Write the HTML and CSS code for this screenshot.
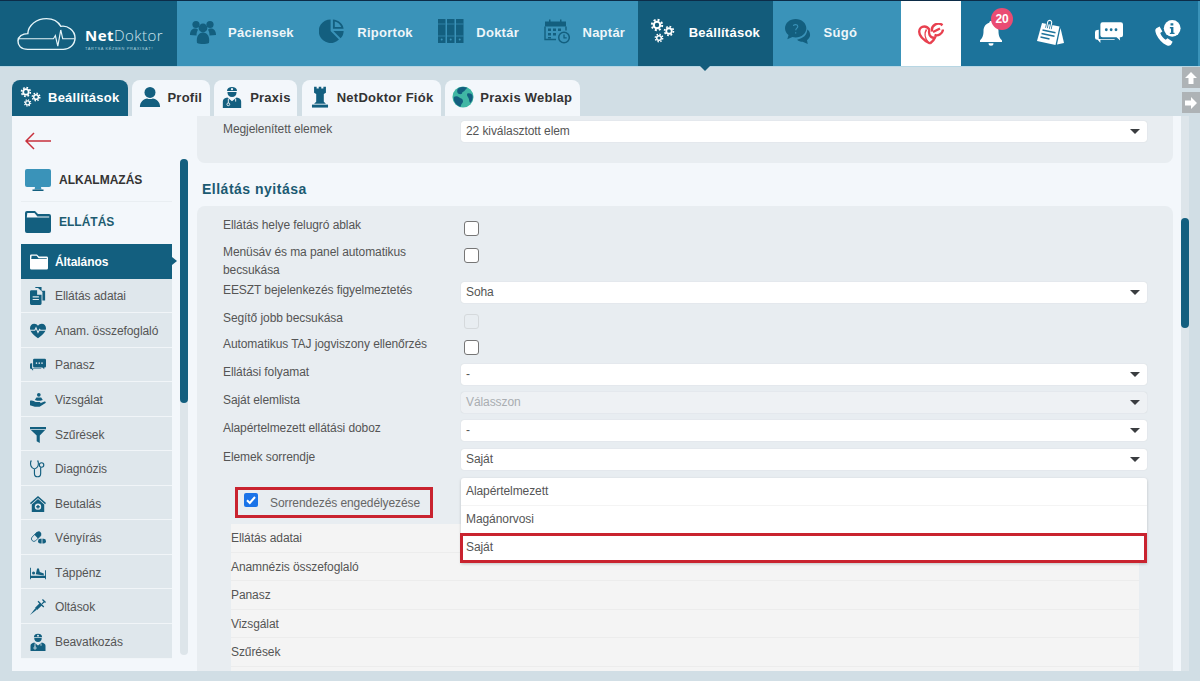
FILE: index.html
```html
<!DOCTYPE html>
<html lang="hu">
<head>
<meta charset="utf-8">
<title>NetDoktor – Beállítások</title>
<link rel="stylesheet" href="styles.css">
</head>
<body>
<svg class="defs" width="0" height="0" aria-hidden="true">
  <symbol id="gear" viewBox="-10 -10 20 20">
    <circle r="4.6" fill="none" stroke="currentColor" stroke-width="3"/>
    <circle r="7.4" fill="none" stroke="currentColor" stroke-width="2.8" stroke-dasharray="2.9 2.9"/>
  </symbol>
  <symbol id="gears" viewBox="0 0 26 26">
    <use href="#gear" x="0" y="0" width="14" height="14"/>
    <use href="#gear" x="13" y="7" width="12" height="12"/>
    <use href="#gear" x="4" y="15" width="10" height="10"/>
  </symbol>
  <symbol id="users" viewBox="0 0 26 26">
    <circle cx="6" cy="6.5" r="3.6"/><circle cx="20" cy="6.5" r="3.6"/><circle cx="13" cy="10" r="4.4"/>
    <path d="M0 17c0-4 2-6.500 5-6.500 1.500 0 2.300.5 3 1.300-1 1.500-1.500 3-1.500 5.700z"/>
    <path d="M26 17c0-4-2-6.500-5-6.500-1.500 0-2.300.5-3 1.300 1 1.500 1.500 3 1.500 5.700z"/>
    <path d="M7 25c-1-6 1.500-10.500 6-10.500s7 4.500 6 10.500c-3 1.300-9 1.300-12 0z"/>
  </symbol>
  <symbol id="pie" viewBox="0 0 28 28">
    <path d="M12.500 1.500a12.700 12.700 0 1 0 9 21.600l-9-9.100z"/>
    <path d="M15 1.500v10h11.500C26 6 21 2 15 1.500zM17 3.800c3.300.8 6 3.300 7 6h-7z" fill-rule="evenodd"/>
    <path d="M15.500 14h11c0 3-1 5.800-3.300 7.800z"/>
  </symbol>
  <symbol id="books" viewBox="0 0 26 28">
    <path d="M0 2h7.500v24H0zM9 2h7.500v24H9zM18 2h7.500v24H18z"/>
    <path d="M0 7h7.500M9 7h7.500M18 7h7.500M0 19h7.500M9 19h7.500M18 19h7.500" stroke="#3a93b9" stroke-width=".7"/>
    <circle cx="3.700" cy="22.500" r="1" fill="#3a93b9"/><circle cx="12.700" cy="22.500" r="1" fill="#3a93b9"/><circle cx="21.700" cy="22.500" r="1" fill="#3a93b9"/>
  </symbol>
  <symbol id="calendar" viewBox="0 0 26 27">
    <path d="M1 4h21v5H1z"/>
    <path d="M1 9v13h11M22 9v4" fill="none" stroke="currentColor" stroke-width="1.400"/>
    <path d="M5 2h1.500v4H5zM16 2h1.500v4H16zM4 11h3v2.500H4zM9 11h3v2.500H9zM14 11h3v2.500h-3zM4 15.500h3V18H4zM9 15.500h3V18H9zM4 19.500h3V21H4z"/>
    <circle cx="20" cy="20" r="5.300" fill="none" stroke="currentColor" stroke-width="1.500"/>
    <path d="M20 17v3.300h2.700" fill="none" stroke="currentColor" stroke-width="1.300"/>
  </symbol>
  <symbol id="help" viewBox="0 0 28 28">
    <path d="M11.500 1C5 1 0 5.500 0 11c0 3 1.500 5.600 3.800 7.400L2.500 23l5.500-2.600c1.100.3 2.300.5 3.500.5 6.300 0 11.500-4.400 11.500-9.900S17.800 1 11.500 1z"/>
    <path d="M24 12.500c0 5.500-4.500 10-11 10.800 1.500 1.500 3.800 2.300 6 2.300l5.500 2.300-.8-4c2-1.300 3.300-3.300 3.300-5.500 0-2.500-1-4.500-3-5.900z"/>
    <path d="M9 8.500c.3-1.800 4.800-2 4.800.6 0 1.800-2.200 1.800-2.200 4M11.500 15.300v1.400" fill="none" stroke="#3a93b9" stroke-width="1.200"/>
  </symbol>
  <symbol id="heart-tool" viewBox="0 0 26 22">
    <path d="M12 20.500C5 17 1.200 13 1.200 8.800 1.200 5.500 3.700 3.500 6.300 3.500c2.200 0 4 1.300 5.200 3.300" fill="none" stroke="currentColor" stroke-width="2.400"/>
    <path d="M12 20.500c2.500-2 4.300-4 5-6-2 .4-4.500-.6-5.500-2.800C10 7.600 12 7 12 7" fill="none" stroke="currentColor" stroke-width="2.400"/>
    <path d="M8.500 6.500c-2 3-2 8 1.500 12.500" fill="none" stroke="currentColor" stroke-width="1.500"/>
    <path d="M14 8.500a6.500 6.500 0 0 1 10.500-6.300M25 6.500a6.500 6.500 0 0 1-8.500 5.500" fill="none" stroke="currentColor" stroke-width="2.400"/>
    <path d="M15 9l7-3.500" stroke="currentColor" stroke-width="2.400"/>
  </symbol>
  <symbol id="bell" viewBox="0 0 24 28">
    <path d="M12 2c-1 0-1.700.7-1.700 1.700C6.500 4.700 4.500 8 4.500 12c0 5-1.300 7-3.500 9.500v1.500h22v-1.500C20.800 19 19.500 17 19.500 12c0-4-2-7.300-5.800-8.300C13.700 2.700 13 2 12 2z"/>
    <path d="M9.500 24.200h5a2.500 2.500 0 0 1-5 0z"/>
  </symbol>
  <symbol id="note" viewBox="0 0 28 28">
    <path d="M24.500 9 28 24l-7 1.500z"/>
    <path d="M6 4 23.500 7.500 19.500 26 1 22z"/>
    <path d="M6.500 11l13 2.700M5.500 14.500l13 2.700M4.500 18l9 2" stroke="#1c739b" stroke-width="1.500"/>
    <path d="M10.500 9l1.200-6a2 2 0 0 1 4 .8L14.300 10" fill="none" stroke="#1c739b" stroke-width="2.600"/>
    <path d="M10.500 9l1.200-6a2 2 0 0 1 4 .8L14.300 10" fill="none" stroke="#fff" stroke-width="1.100"/>
  </symbol>
  <symbol id="chat" viewBox="0 0 26 24">
    <path d="M7 2h17a2 2 0 0 1 2 2v10a2 2 0 0 1-2 2h-1l.3 3-3.300-3H7a2 2 0 0 1-2-2V4a2 2 0 0 1 2-2z"/>
    <path d="M3.500 9v8.500h15l-.5.8H5v3l-2.500-3H2a2 2 0 0 1-2-2v-5a2 2 0 0 1 2-2z"/>
    <circle cx="10.500" cy="9" r="1.300" fill="#1c739b"/><circle cx="15" cy="9" r="1.300" fill="#1c739b"/><circle cx="19.500" cy="9" r="1.300" fill="#1c739b"/>
  </symbol>
  <symbol id="chat-dark" viewBox="0 0 26 24">
    <path d="M7 2h17a2 2 0 0 1 2 2v10a2 2 0 0 1-2 2h-1l.3 3-3.300-3H7a2 2 0 0 1-2-2V4a2 2 0 0 1 2-2z"/>
    <path d="M3.500 9v8.500h15l-.5.8H5v3l-2.500-3H2a2 2 0 0 1-2-2v-5a2 2 0 0 1 2-2z"/>
    <circle cx="10.500" cy="9" r="1.300" fill="#dfe7ec"/><circle cx="15" cy="9" r="1.300" fill="#dfe7ec"/><circle cx="19.500" cy="9" r="1.300" fill="#dfe7ec"/>
  </symbol>
  <symbol id="phone-info" viewBox="0 0 28 30">
    <path d="M5 8 1.500 10c-1.500 1-1.500 3 0 6.500 2.500 5.500 6.500 9.500 11 11.500 2.500 1 4 .7 5-1l1.500-2.500-5.500-4-2 1.800c-2.500-1.500-4.500-4-5.800-7.300l2.300-1.500z"/>
    <circle cx="18.500" cy="10" r="9"/>
    <path d="M16.700 4.500h3v2.500h-3zM16 8.700h3.800v6h1.200v1.500h-5v-1.500h1.200v-4.500H16z" fill="#1c739b"/>
  </symbol>
  <symbol id="person" viewBox="0 0 24 24">
    <circle cx="12" cy="7" r="6"/>
    <path d="M1 23c0-6 4-9 8-9.500 1 1 5 1 6 0 4 .5 8 3.500 8 9.500z"/>
  </symbol>
  <symbol id="doctor" viewBox="0 0 20 24">
    <path d="M4.500 5.500C4.500 2.500 7 1 10 1s5.500 1.500 5.500 4.500z"/>
    <path d="M5 6.500h10c0 3.500-2 5.500-5 5.500S5 10 5 6.500z"/>
    <path d="M0 24v-7c0-2.500 2-4 5-4.500l5 4 5-4c3 .5 5 2 5 4.500v7z"/>
    <circle cx="10" cy="3.500" r="1.200" fill="#f3f7fb"/>
    <path d="M6 14v4.500M14 14v3" stroke="#f3f7fb" stroke-width="1" fill="none"/>
    <circle cx="6" cy="20" r="1.500" fill="none" stroke="#f3f7fb" stroke-width="1"/>
  </symbol>
  <symbol id="rook" viewBox="0 0 22 26">
    <path d="M4 1h3v2h2.500V1h3v2H15V1h3v7l-2.500 1.500v9L18 21H4l2.500-2.500v-9L4 8z"/>
    <path d="M1.500 22h19v3.500h-19z"/>
  </symbol>
  <symbol id="globe" viewBox="0 0 24 24">
    <circle cx="12" cy="12" r="11.500" fill="#40b7a4"/>
    <path d="M7 2.500C9 1 14 .5 16.500 2c-.5 1.500-2 1.500-2.500 3-.8 1.500-3 1-3 3-.5 1.500-3 1-4 .5C5.500 7.500 5 4 7 2.500zM2 12c2-1 4-1 6 .5 2 1 4 1.500 4 4 0 2-2 2.500-2.500 6C5 21.500 1 17 2 12zM17 8c2-.5 4.500 0 5.500 2.500.5 3-.5 6-2.500 8-1.500-1-1-4-2-5.500-1-1.500-2.500-3-1-5z" fill="#135f7f"/>
  </symbol>
  <symbol id="monitor" viewBox="0 0 26 22">
    <path d="M2 0h22a2 2 0 0 1 2 2v14a2 2 0 0 1-2 2H2a2 2 0 0 1-2-2V2a2 2 0 0 1 2-2z" fill="#3a93b9"/>
    <path d="M10 18h6l.5 2.500h-7z" fill="#3a93b9"/>
    <path d="M7.500 20.500h11V22h-11z" fill="#135f7f"/>
  </symbol>
  <symbol id="folder" viewBox="0 0 26 22">
    <path d="M2 0h8l3 3h11a2 2 0 0 1 2 2v15a2 2 0 0 1-2 2H2a2 2 0 0 1-2-2V2a2 2 0 0 1 2-2zM1.800 6.500h22.400V5.500H12.400L9.500 2H2.300z" fill-rule="evenodd"/>
  </symbol>
  <symbol id="docs" viewBox="0 0 18 20">
    <path d="M6 0h7v4h4v11h-3V5.500L9 1H6z"/>
    <path d="M1.500 3.500H8v5h5v10a1.500 1.500 0 0 1-1.500 1.500h-10A1.500 1.500 0 0 1 0 18.500V5a1.500 1.500 0 0 1 1.500-1.500z"/>
    <path d="M3 11h7M3 14h7" stroke="#dfe7ec" stroke-width="1.200"/>
  </symbol>
  <symbol id="heartbeat" viewBox="0 0 20 18">
    <path d="M10 18C4 13.500 0 10 0 5.500 0 2.300 2.300 0 5.300 0 7.200 0 9 1 10 2.500 11 1 12.800 0 14.700 0 17.700 0 20 2.300 20 5.500 20 10 16 13.500 10 18z"/>
    <path d="M0 8h6l1.500-3 2.500 6 2-4 1 1h7" fill="none" stroke="#dfe7ec" stroke-width="1.300"/>
  </symbol>
  <symbol id="hand" viewBox="0 0 20 18">
    <circle cx="11" cy="2.500" r="2.300"/>
    <path d="M6 9l2-3h6l2 3-3 1H9z"/>
    <path d="M0 10c3-1 5 .5 7 1.500h5c1.500 0 1.500 2 0 2H8.500 12l6-2.500c1.500-.5 2.500 1 1 2l-7 4.500H6l-6-2z"/>
  </symbol>
  <symbol id="filter" viewBox="0 0 18 18"><path d="M0 0h18v2.500H0zM1 3.500h16l-6 6V18l-3.500-2V9.500z"/></symbol>
  <symbol id="stetho" viewBox="0 0 18 20">
    <path d="M2 1H1C0 5 1 9 5 10c4-1 5-5 4-9H8M5 10v5c0 5 7 5 7 0V8" fill="none" stroke="currentColor" stroke-width="1.300"/>
    <circle cx="13" cy="5.500" r="2.500" fill="none" stroke="currentColor" stroke-width="1.300"/>
  </symbol>
  <symbol id="house" viewBox="0 0 18 18">
    <path d="M9 0 18 8l-1 1.200-8-7-8 7L0 8z"/>
    <path d="M9 3.500 16 9.500V18H2V9.500z"/>
    <circle cx="9" cy="12" r="3.600" fill="#dfe7ec"/>
    <path d="M8.200 10h1.600v1.200H11v1.600H9.800V14H8.200v-1.200H7v-1.600h1.200z"/>
  </symbol>
  <symbol id="pills" viewBox="0 0 20 18">
    <path d="M9 1.500 13.500 6 7 12.500a3.200 3.200 0 0 1-4.500-4.500z" fill="none" stroke="currentColor" stroke-width="1.100"/>
    <path d="M9 1.500a3.200 3.200 0 0 1 4.500 4.500L10 9.500 5.500 5z"/>
    <path d="M13 10h4a3 3 0 0 1 0 6h-4a3 3 0 0 1 0-6z"/>
    <path d="M15 9.500v7" stroke="#dfe7ec" stroke-width="1"/>
  </symbol>
  <symbol id="bed" viewBox="0 0 18 14">
    <path d="M0 1h1v13H0zM17 4h1v10h-1zM1 10h16v2.500H1z"/>
    <circle cx="4" cy="7" r="1.700"/>
    <path d="M6.500 8.500 8 2h2l1 4 4.500 1.500v2.200z"/>
  </symbol>
  <symbol id="syringe" viewBox="0 0 18 18">
    <path d="M0 18 6 10.500l1.500 1.500z"/>
    <path d="M5.500 10 11 4.500l2.500 2.500L8 12.500z"/>
    <path d="M9.500 2l6.500 6.500-1 1L8.500 3zM13 5l3-3 1 1-3 3zM14.500 0 18 3.500l-1 1L13.500 1z"/>
  </symbol>
  <symbol id="back" viewBox="0 0 26 18">
    <path d="M9 1 1 9l8 8M1 9h25" fill="none" stroke="#c8303c" stroke-width="1.500"/>
  </symbol>
  <symbol id="cloud" viewBox="0 0 60 42" preserveAspectRatio="none">
    <path d="M11 40C4 40 .8 35 1 29.500 1.300 24 5.500 20.500 11 20.500 11.500 10 20 2 30 2c7 0 12 4 14.500 9.500C51 10 59 16 59 26c0 8-5.500 14-12 14z" fill="none" stroke="#e6f4f8" stroke-width="1.500"/>
    <path d="M2 27h35l2-4 2.500 13 3-20 2 11h12" fill="none" stroke="#e6f4f8" stroke-width="1.200"/>
  </symbol>
</svg>

<header class="topbar">
  <div class="logo">
    <svg class="logo-cloud"><use href="#cloud"/></svg>
    <div class="logo-text">
      <div class="logo-name"><b>Net</b>Doktor</div>
      <div class="logo-tag">TARTSA KÉZBEN PRAXISÁT!</div>
    </div>
  </div>
  <nav class="mainnav">
    <a class="navitem"><svg class="navicon"><use href="#users"/></svg>Páciensek</a>
    <a class="navitem"><svg class="navicon"><use href="#pie"/></svg>Riportok</a>
    <a class="navitem"><svg class="navicon"><use href="#books"/></svg>Doktár</a>
    <a class="navitem"><svg class="navicon"><use href="#calendar"/></svg>Naptár</a>
    <a class="navitem navitem-active"><svg class="navicon"><use href="#gears"/></svg>Beállítások</a>
    <a class="navitem"><svg class="navicon"><use href="#help"/></svg>Súgó</a>
  </nav>
  <div class="heartbox"><svg class="hearticon"><use href="#heart-tool"/></svg></div>
  <div class="tools">
    <span class="tool"><svg class="toolicon"><use href="#bell"/></svg><span class="badge">20</span></span>
    <span class="tool"><svg class="toolicon"><use href="#note"/></svg></span>
    <span class="tool"><svg class="toolicon"><use href="#chat"/></svg></span>
    <span class="tool"><svg class="toolicon"><use href="#phone-info"/></svg></span>
  </div>
</header>

<div class="cornerbtns">
  <span class="cornerbtn"><svg viewBox="0 0 14 14"><path d="M7 1 1 7h3.500v6h5V7H13z"/></svg></span>
  <span class="cornerbtn"><svg viewBox="0 0 14 14"><path d="M13 7 7 1v3.500H1v5h6V13z"/></svg></span>
</div>

<div class="tabs">
  <a class="tab tab-active"><svg class="tabicon"><use href="#gears"/></svg>Beállítások</a>
  <a class="tab"><svg class="tabicon"><use href="#person"/></svg>Profil</a>
  <a class="tab tab-praxis"><svg class="tabicon tabicon-narrow"><use href="#doctor"/></svg>Praxis</a>
  <a class="tab tab-account"><svg class="tabicon"><use href="#rook"/></svg>NetDoktor Fiók</a>
  <a class="tab"><svg class="tabicon"><use href="#globe"/></svg>Praxis Weblap</a>
</div>

<div class="workspace">
  <div class="card">
    <aside class="sidebar">
      <div class="sidecol">
        <svg class="backarrow"><use href="#back"/></svg>
        <div class="sidehead sidehead-first"><svg class="sideheadicon"><use href="#monitor"/></svg>ALKALMAZÁS</div>
        <div class="sidehead sidehead-open"><svg class="sideheadicon"><use href="#folder"/></svg>ELLÁTÁS</div>
        <ul class="sidemenu">
          <li class="sideitem sideitem-active"><svg class="sideicon"><use href="#folder"/></svg>Általános</li>
          <li class="sideitem"><svg class="sideicon"><use href="#docs"/></svg>Ellátás adatai</li>
          <li class="sideitem"><svg class="sideicon"><use href="#heartbeat"/></svg>Anam. összefoglaló</li>
          <li class="sideitem"><svg class="sideicon"><use href="#chat-dark"/></svg>Panasz</li>
          <li class="sideitem"><svg class="sideicon"><use href="#hand"/></svg>Vizsgálat</li>
          <li class="sideitem"><svg class="sideicon"><use href="#filter"/></svg>Szűrések</li>
          <li class="sideitem"><svg class="sideicon"><use href="#stetho"/></svg>Diagnózis</li>
          <li class="sideitem"><svg class="sideicon"><use href="#house"/></svg>Beutalás</li>
          <li class="sideitem"><svg class="sideicon"><use href="#pills"/></svg>Vényírás</li>
          <li class="sideitem"><svg class="sideicon"><use href="#bed"/></svg>Táppénz</li>
          <li class="sideitem"><svg class="sideicon"><use href="#syringe"/></svg>Oltások</li>
          <li class="sideitem"><svg class="sideicon"><use href="#doctor"/></svg>Beavatkozás</li>
        </ul>
      </div>
      <div class="sidescroll"><div class="sidethumb"></div></div>
    </aside>

    <main class="content">
      <section class="panel panel-top">
        <div class="row">
          <label class="label">Megjelenített elemek</label>
          <div class="select">22 kiválasztott elem<i class="caret"></i></div>
        </div>
      </section>

      <h2 class="heading">Ellátás nyitása</h2>

      <section class="panel panel-main">
        <div class="row row-27"><label class="label label-check">Ellátás helye felugró ablak</label><span class="check"></span></div>
        <div class="row row-34"><label class="label label-check">Menüsáv és ma panel automatikus becsukása</label><span class="check"></span></div>
        <div class="row row-32"><label class="label">EESZT bejelenkezés figyelmeztetés</label><div class="select">Soha<i class="caret"></i></div></div>
        <div class="row row-26"><label class="label label-check">Segítő jobb becsukása</label><span class="check check-disabled"></span></div>
        <div class="row row-24"><label class="label label-check">Automatikus TAJ jogviszony ellenőrzés</label><span class="check"></span></div>
        <div class="row row-28"><label class="label">Ellátási folyamat</label><div class="select">-<i class="caret"></i></div></div>
        <div class="row row-28"><label class="label">Saját elemlista</label><div class="select select-disabled">Válasszon<i class="caret"></i></div></div>
        <div class="row row-29"><label class="label">Alapértelmezett ellátási doboz</label><div class="select">-<i class="caret"></i></div></div>
        <div class="row row-38"><label class="label">Elemek sorrendje</label><div class="select">Saját<i class="caret"></i></div></div>

        <div class="order">
          <div class="order-toggle">
            <span class="tick"><svg viewBox="0 0 14 14"><path d="M3 7.200 5.800 10 11 4" fill="none" stroke="#fff" stroke-width="2"/></svg></span>
            Sorrendezés engedélyezése
          </div>
          <ul class="order-list">
            <li class="order-item">Ellátás adatai</li>
            <li class="order-item">Anamnézis összefoglaló</li>
            <li class="order-item">Panasz</li>
            <li class="order-item">Vizsgálat</li>
            <li class="order-item">Szűrések</li>
            <li class="order-item"></li>
          </ul>
          <ul class="dropdown">
            <li class="dropitem">Alapértelmezett</li>
            <li class="dropitem">Magánorvosi</li>
            <li class="dropitem dropitem-marked">Saját</li>
          </ul>
        </div>
      </section>
    </main>
  </div>
  <div class="pagescroll"><div class="pagethumb"></div></div>
</div>
</body>
</html>
```
FILE: styles.css
```css
* { box-sizing: border-box; }
html, body { margin: 0; height: 100%; }
body {
  position: relative;
  height: 681px;
  overflow: hidden;
  background: #d1dee5;
  font-family: "Liberation Sans", Arial, sans-serif;
  font-size: 12px;
  letter-spacing: -.08px;
  color: #555;
}
ul { list-style: none; margin: 0; padding: 0; }
svg { fill: currentColor; display: block; flex: none; }
.defs { position: absolute; }

/* top bar */
.topbar {
  display: flex;
  height: 67px;
  border-top: 1px solid #0c2c48;
  border-bottom: 1px solid #b7d6e3;
  background: #3a93b9;
}
.logo {
  width: 177px;
  display: flex;
  gap: 9px;
  padding: 16px 0 0 17px;
  background: #135f7f;
  color: #fff;
}
.logo-cloud { width: 59px; height: 34px; }
.logo-text { padding-top: 8px; }
.logo-name {
  font-family: "Open Sans", sans-serif;
  font-size: 15px;
  font-weight: 300;
  line-height: 20px;
  letter-spacing: .45px;
  color: #cfe6ee;
  white-space: nowrap;
}
.logo-name b { color: #fff; font-weight: 700; }
.logo-tag { font-size: 4px; line-height: 8px; letter-spacing: .6px; color: #a9cfdd; white-space: nowrap; }
.mainnav { display: flex; width: 724px; }
.navitem {
  position: relative;
  display: flex;
  align-items: center;
  gap: 12.5px;
  padding: 0 12.5px 3px;
  font-size: 13px;
  font-weight: 700;
  letter-spacing: .25px;
  color: #eef6f9;
  white-space: nowrap;
}
.navicon { width: 26px; height: 28px; color: #135f7f; margin-top: -3px; }
.navitem-active { background: #135c7b; color: #fff; }
.navitem-active .navicon { color: #fff; }
.navitem-active::after {
  content: "";
  position: absolute;
  left: 62px;
  top: 65px;
  border: 5px solid transparent;
  border-top: 5px solid #135c7b;
  border-bottom: 0;
}
.heartbox { width: 60px; display: flex; align-items: center; justify-content: center; background: #fff; color: #e8404f; }
.hearticon { width: 26px; height: 22px; }
.tools { width: 236.5px; display: flex; background: #1c739b; color: #fff; }
.tool { position: relative; width: 59px; display: flex; align-items: center; justify-content: center; }
.toolicon { width: 28px; height: 28px; margin-top: -1px; }
.badge {
  position: absolute;
  left: 30px;
  top: 7px;
  width: 22px;
  height: 22px;
  border-radius: 50%;
  background: #ea4c73;
  color: #fff;
  font-size: 12px;
  font-weight: 700;
  line-height: 22px;
  text-align: center;
}

/* corner buttons */
.cornerbtns { position: absolute; right: 0; top: 67px; display: flex; flex-direction: column; gap: 4px; }
.cornerbtn { width: 18px; height: 21px; display: flex; align-items: center; justify-content: center; background: #aeb3b6; color: #fff; }
.cornerbtn svg { width: 14px; height: 14px; }

/* tabs */
.tabs { display: flex; gap: 4px; height: 49px; padding: 13px 0 0 12px; }
.tab {
  display: flex;
  align-items: center;
  gap: 6px;
  padding: 0 8px 2px 7px;
  border-radius: 8px 8px 0 0;
  background: #f3f7fb;
  color: #333;
  font-size: 13px;
  font-weight: 700;
  letter-spacing: .25px;
  white-space: nowrap;
}
.tab-active { padding: 0 9px 2px 8px; background: #135f7f; color: #fff; }
.tabicon { width: 22px; height: 22px; color: #135f7f; }
.tab-active .tabicon { color: #fff; }
.tabicon-narrow { width: 20px; }
.tab-praxis { padding: 0 6px 2px 8px; gap: 8px; }
.tab-account { margin-left: 1px; }

/* workspace */
.workspace { display: flex; height: 555px; padding-left: 12px; }
.card { display: flex; width: 1170px; height: 555px; overflow: hidden; background: #f3f7fb; }
.pagescroll { width: 8px; background: #dde5ea; margin-left: -1px; }
.pagethumb { height: 110px; margin-top: 102px; border-radius: 4px; background: #135f7f; }

/* sidebar */
.sidebar { display: flex; width: 185px; flex: none; padding-left: 9px; gap: 8px; }
.sidecol { width: 151px; }
.backarrow { width: 26px; height: 18px; margin: 16px 0 0 4px; }
.sidehead {
  display: flex;
  align-items: center;
  gap: 8px;
  margin-left: 4px;
  font-weight: 700;
  font-size: 12px;
  letter-spacing: 0;
  color: #333;
}
.sideheadicon { width: 26px; height: 22px; color: #135f7f; }
.sidehead-first { margin-top: 19px; padding-bottom: 10px; margin-left: 0; padding-left: 4px; border-bottom: 1px solid #e9eef2; }
.sidehead-open { margin-top: 9px; color: #1d5c70; }
.sidemenu { height: 411px; margin-top: 11px; overflow: clip; overflow-clip-margin: 6px; }
.sideitem {
  position: relative;
  display: flex;
  align-items: center;
  gap: 9px;
  height: 34.55px;
  padding: 2px 0 0 9px;
  border-bottom: 1px solid #f1f5f8;
  background: #dfe7ec;
  color: #555;
}
.sideicon { width: 16px; height: 18px; color: #135f7f; }
.sideitem-active { background: #135f7f; color: #fff; font-weight: 700; border-bottom: 0; }
.sideitem-active .sideicon { color: #fff; width: 18px; margin-right: -2px; }
.sideitem-active::after {
  content: "";
  position: absolute;
  right: -5px;
  top: 13px;
  border: 4px solid transparent;
  border-left: 5px solid #135f7f;
  border-right: 0;
}
.sidescroll { width: 8px; height: 496px; margin-top: 43px; border-radius: 4px; background: #dde5ea; }
.sidethumb { height: 244px; border-radius: 4px; background: #135f7f; }

/* content */
.content { width: 976px; flex: none; }
.panel { padding: 0 26px; background: #e8edf1; }
.panel-top { height: 47px; padding-top: 5px; border-radius: 0 0 8px 8px; }
.panel-main { height: 465px; padding-top: 15px; border-radius: 8px 8px 0 0; }
.heading { margin: 0; height: 43px; padding: 18px 0 0 5px; font-size: 14px; line-height: 17px; font-weight: 700; color: #1b5a72; letter-spacing: .5px; }
.row { display: grid; grid-template-columns: 238px 1fr; align-items: start; }
.row-24 { height: 24px; }
.row-26 { height: 26px; }
.row-27 { height: 27px; }
.row-28 { height: 28px; }
.row-29 { height: 29px; }
.row-32 { height: 32px; }
.row-34 { height: 34px; }
.row-38 { height: 38px; }
.label { display: block; padding-right: 30px; line-height: 17.5px; color: #555; }
.label-check { margin-top: -4px; }
.select {
  position: relative;
  height: 21px;
  padding-left: 5px;
  border-radius: 3px;
  background: #fff;
  box-shadow: 0 0 1px #bfc4c8;
  line-height: 21px;
  color: #555;
}
.select-disabled { background: #eef1f4; color: #a9adb1; }
.caret {
  position: absolute;
  right: 7px;
  top: 8px;
  border: 5px solid transparent;
  border-top: 5px solid #3a3d40;
  border-bottom: 0;
}
.check {
  display: block;
  width: 15px;
  height: 15px;
  margin-left: 3px;
  border: 1px solid #767676;
  border-radius: 3px;
  background: #fff;
}
.check-disabled { border-color: #d5d9dc; background: #e8edf1; }

.order { position: relative; margin: 0 0 0 8px; width: 908px; }
.order-toggle {
  display: flex;
  align-items: center;
  gap: 12px;
  width: 198px;
  height: 31px;
  margin-left: 4px;
  padding-left: 6px;
  border: 3px solid #c9232f;
  color: #666;
  white-space: nowrap;
}
.tick { width: 14px; height: 14px; border-radius: 2px; background: #1a73e8; margin-top: -5px; }
.tick svg { width: 14px; height: 14px; }
.order-list { margin-top: 6px; }
.order-item {
  height: 28.6px;
  border-bottom: 1px solid #ececec;
  background: #f4f4f4;
  line-height: 28.6px;
  color: #555;
}
.dropdown {
  position: absolute;
  left: 230px;
  top: -9px;
  width: 686px;
  height: 85px;
  border-radius: 3px 3px 0 0;
  background: #fff;
  box-shadow: 0 1px 3px rgba(0, 0, 0, .2);
}
.dropitem { height: 28px; padding-left: 5px; border-bottom: 1px solid #f4f4f4; line-height: 26px; color: #555; }
.dropitem-marked {
  height: 30px;
  margin: -1px 0 0 -1px;
  padding-left: 3px;
  border: 3px solid #c9232f;
  line-height: 23px;
}
```
